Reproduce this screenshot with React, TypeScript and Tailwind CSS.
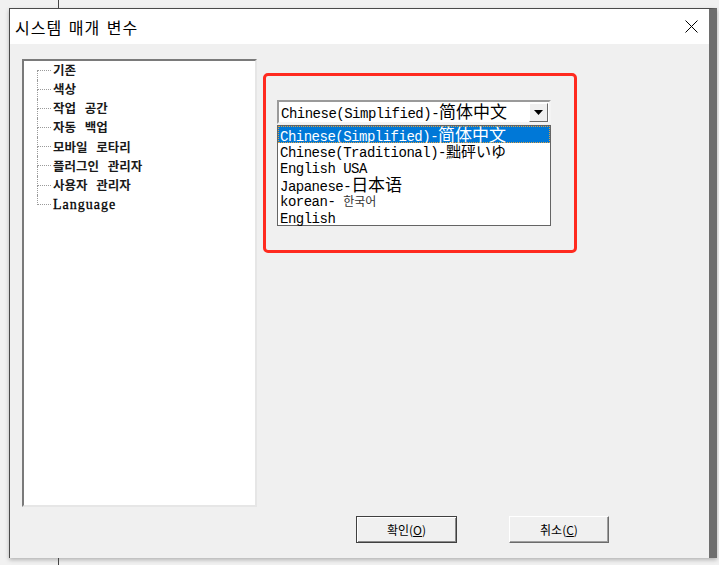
const kr = { fontFamily: '"Noto Sans CJK KR", "Noto Sans", sans-serif' };
const mono = { fontFamily: '"Liberation Mono", "Noto Sans CJK SC", monospace' };
const cjk = { fontFamily: '"Noto Sans CJK SC", "Noto Sans CJK JP", sans-serif' };

const treeItems = ["기존", "색상", "작업 공간", "자동 백업", "모바일 로타리", "플러그인 관리자", "사용자 관리자", "Language"];

const TreeRow = ({ label, first, last }: { label: string; first: boolean; last: boolean }) => (
  <div className="flex h-[19.1px] items-center">
    <div className="ml-[13px] flex h-full w-[14px] flex-col">
      <div className={`h-[10px] border-b border-dotted border-[#9a9a9a] ${first ? "" : "border-l"}`} />
      <div className={`flex-1 ${last ? "" : "border-l border-dotted border-[#9a9a9a]"}`} />
    </div>
    {label === "Language" ? (
      <span className="ml-[2px] text-[14px] tracking-[1px] text-black [-webkit-text-stroke:0.3px_#000]" style={{ fontFamily: '"Liberation Serif", serif' }}>
        {label}
      </span>
    ) : (
      <span className="ml-[2px] text-[12.5px] font-semibold text-[#1a1a1a] [word-spacing:6px]" style={kr}>
        {label}
      </span>
    )}
  </div>
);

const Opt = ({ latin, rest, restClass, selected }: { latin: string; rest: string; restClass: string; selected?: boolean }) => (
  <div
    className={`h-[16.5px] whitespace-pre pl-[2px] leading-[16.5px] ${
      selected ? "bg-[#0078d7] text-white outline-1 outline-dotted outline-[#e0a040] -outline-offset-1" : "text-black"
    }`}
  >
    <span className="text-[14px] tracking-[-0.5px]" style={mono}>
      {latin}
    </span>
    {rest && (
      <span className={restClass} style={restClass.includes("kr") ? kr : cjk}>
        {rest}
      </span>
    )}
  </div>
);

export default function App() {
  return (
    <div className="relative h-[565px] w-[719px] overflow-hidden bg-[#f1f1f1]">
      <div className="absolute left-[58px] top-0 h-[8px] w-px bg-[#444]" />
      <div className="absolute bottom-0 left-[58px] h-[7px] w-px bg-[#444]" />

      <div className="ml-[9px] mt-[8px] flex h-[550px] w-[708px] flex-col border-l border-t border-[#4a4a4a] border-r-[8px] border-r-[#6e6e6e] shadow-[0_2px_4px_rgba(0,0,0,0.25)]">
        {/* title bar */}
        <div className="flex h-[35px] items-center justify-between bg-white pl-[5px] pr-[9px]">
          <span className="text-[16px] tracking-[1px] text-black [word-spacing:2px]" style={kr}>
            시스템 매개 변수
          </span>
          <svg width="13" height="13" viewBox="0 0 13 13" className="mr-[2px]">
            <path d="M0.5 0.5 L12.5 12.5 M12.5 0.5 L0.5 12.5" stroke="#000" strokeWidth="1" />
          </svg>
        </div>

        {/* client */}
        <div className="flex flex-1 bg-[#f0f0f0] pl-[12px] pt-[15px]">
          <div className="h-[448px] w-[235px] border-2 border-l-[#7a7a7a] border-t-[#7a7a7a] border-b-[#e6e6e6] border-r-[#e6e6e6] bg-white">
            {treeItems.map((t, i) => (
              <TreeRow key={t} label={t} first={i === 0} last={i === treeItems.length - 1} />
            ))}
          </div>

          <div className="ml-[6px] flex flex-col">
            <div className="mt-[14px] h-[180px] w-[314px] rounded-[5px] border-[3px] border-[#ff2a1f] pl-[11px] pt-[24px]">
              {/* combo */}
              <div className="flex h-[24px] w-[274px] items-center border-2 border-l-[#9a9a9a] border-t-[#9a9a9a] border-b-[#f4f4f4] border-r-[#f4f4f4] bg-white">
                <div className="flex-1 whitespace-nowrap pl-[2px] leading-[20px] text-black">
                  <span className="text-[14px] tracking-[-0.5px]" style={mono}>
                    Chinese(Simplified)-
                  </span>
                  <span className="text-[17px]" style={cjk}>
                    简体中文
                  </span>
                </div>
                <div className="mr-px flex h-[19px] w-[19px] items-center justify-center border border-l-white border-t-white border-b-[#6b6b6b] border-r-[#6b6b6b] bg-[#f0f0f0]">
                  <svg width="9" height="5" viewBox="0 0 9 5">
                    <path d="M0 0 H9 L4.5 5 Z" fill="#000" />
                  </svg>
                </div>
              </div>
              {/* list */}
              <div className="mt-[1px] w-[274px] border border-[#646464] bg-white">
                <Opt latin="Chinese(Simplified)-" rest="简体中文" restClass="text-[17px]" selected />
                <Opt latin="Chinese(Traditional)-" rest="黜砰いゆ" restClass="text-[15px]" />
                <Opt latin="English USA" rest="" restClass="" />
                <Opt latin="Japanese-" rest="日本语" restClass="text-[17px]" />
                <Opt latin="korean- " rest="한국어" restClass="kr text-[12px] text-[#333]" />
                <Opt latin="English" rest="" restClass="" />
              </div>
            </div>

            <div className="mt-[263px] flex">
              <button
                className="ml-[93px] flex h-[27px] w-[101px] items-center justify-center border border-[#404040] bg-[#f0f0f0] text-[12px] text-black shadow-[inset_1px_1px_0_#fff,inset_-1px_-1px_0_#8a8a8a]"
                style={kr}
              >
                확인(<span className="underline">O</span>)
              </button>
              <button
                className="ml-[52px] flex h-[27px] w-[100px] items-center justify-center border border-l-white border-t-white border-b-[#6b6b6b] border-r-[#6b6b6b] bg-[#f0f0f0] text-[12px] text-black shadow-[inset_-1px_-1px_0_#a0a0a0]"
                style={kr}
              >
                취소(<span className="underline">C</span>)
              </button>
            </div>
          </div>
        </div>
      </div>
    </div>
  );
}
